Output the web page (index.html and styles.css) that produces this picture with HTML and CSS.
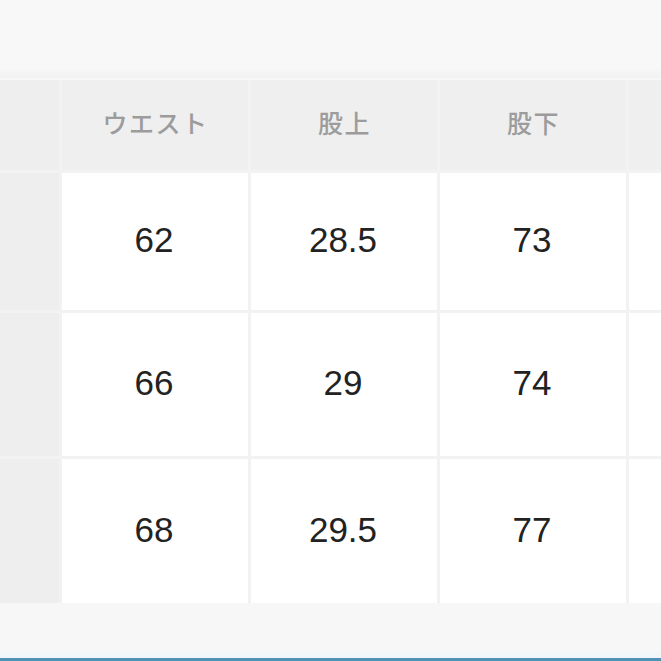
FILE: index.html
```html
<!DOCTYPE html>
<html lang="ja">
<head>
<meta charset="utf-8">
<link rel="stylesheet" href="styles.css">
</head>
<body>
<div class="page">
  <div class="topbar"></div>
  <div class="sizes">
    <div class="cell head side"></div>
    <div class="cell head">ウエスト</div>
    <div class="cell head">股上</div>
    <div class="cell head">股下</div>
    <div class="cell head"></div>

    <div class="cell side"></div>
    <div class="cell num">62</div>
    <div class="cell num">28.5</div>
    <div class="cell num">73</div>
    <div class="cell num"></div>

    <div class="cell side"></div>
    <div class="cell num">66</div>
    <div class="cell num">29</div>
    <div class="cell num">74</div>
    <div class="cell num"></div>

    <div class="cell side"></div>
    <div class="cell num">68</div>
    <div class="cell num">29.5</div>
    <div class="cell num">77</div>
    <div class="cell num"></div>
  </div>
  <div class="bottom"></div>
</div>
</body>
</html>
```
FILE: styles.css
```css
html, body {
  margin: 0;
  padding: 0;
  background: #f7f7f7;
  overflow: hidden;
}
.page {
  width: 661px;
  height: 661px;
  overflow: hidden;
  display: flex;
  flex-direction: column;
  background: #f7f7f7;
}
.topbar {
  height: 78px;
  flex: none;
  background: linear-gradient(#f8f8f8 0, #f8f8f8 68px, #f1f1f1 78px);
}
.sizes {
  flex: none;
  width: 900px;
  margin-top: 2px;
  display: grid;
  grid-template-columns: 59px 186px 186px 186px 186px;
  grid-template-rows: 90px 137px 143px 144px;
  column-gap: 3px;
  row-gap: 3px;
  background: #f2f2f2;
}
.cell {
  display: flex;
  align-items: center;
  justify-content: center;
  background: #ffffff;
}
.cell.head {
  background: #efefef;
  color: #9c9c9c;
  font-family: "Noto Sans CJK JP", "Noto Sans", sans-serif;
  font-weight: 500;
  font-size: 25px;
  letter-spacing: 1.5px;
  padding-bottom: 6px;
  padding-left: 1px;
}
.cell.side {
  background: #eeeeee;
}
.cell.num {
  color: #222222;
  font-family: "Liberation Sans", Arial, sans-serif;
  font-size: 35px;
  padding-bottom: 3px;
  padding-right: 2px;
}
.bottom {
  flex: 1;
  background: linear-gradient(#f7f7f7 0, #f7f7f7 46px, #f0f6fb 54px);
  border-bottom: 3px solid #4f92b6;
}
```
